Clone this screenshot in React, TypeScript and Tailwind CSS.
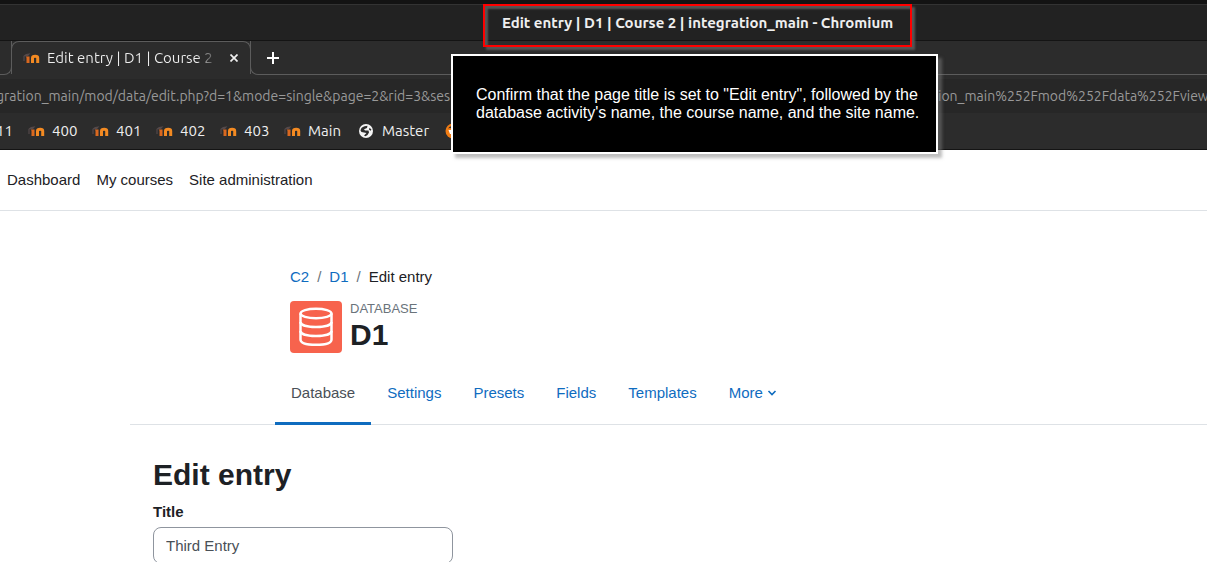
import React from "react";

const chromeFont = "font-['Ubuntu','Noto_Sans',sans-serif]";

function MoodleIcon() {
  return (
    <svg width="17" height="12" viewBox="0 0 17 12" fill="none" aria-hidden="true" className="shrink-0">
      <path d="M0.5 3.800 L3 2 L7.500 1.200 L5 4 L2 4.500 Z" fill="#54494a" />
      <path d="M1 4 V9" stroke="#54494a" strokeWidth="1.200" />
      <path d="M3 4.500 H6.500 V11 H3.500 V6 Z" fill="#d9681f" />
      <path d="M9.500 11 V6 Q9.500 4.300 12.200 4.300 Q14.700 4.300 14.700 6 V11" stroke="#f38a22" strokeWidth="3" />
    </svg>
  );
}

function GlobeIcon() {
  return (
    <svg width="16" height="16" viewBox="0 0 16 16" aria-hidden="true" className="shrink-0">
      <circle cx="8" cy="8" r="7" fill="#f5f5f5" />
      <path d="M2.500 7.500 Q3 4.200 6.500 3.200 L9.500 2.800 L9 5 L6 6.200 L7 7.400 L10.500 7.600 L11 9.500 L9.500 12 L7.500 13.200 L6 12.500 L8.500 10 L3.500 9 Z M11.500 4.800 L13.400 6.500 L12.800 7.800 L11 6.800 Z" fill="#2c2c2c" />
    </svg>
  );
}

function OrangeIcon() {
  return (
    <svg width="16" height="16" viewBox="0 0 16 16" aria-hidden="true" className="shrink-0">
      <circle cx="8" cy="8" r="7.500" fill="#f07c14" />
      <path d="M3 5.500 Q5 2.500 8 3.500 V6 L5 5 Z" fill="#2c2c2c" />
      <path d="M3.500 7 H12 V11 H5 Z" fill="#fff" />
    </svg>
  );
}

function DatabaseIcon() {
  return (
    <svg width="34" height="40" viewBox="0 0 34 40" fill="none" stroke="#fff" strokeWidth="2.500" aria-hidden="true">
      <ellipse cx="17" cy="6.500" rx="15.500" ry="4.700" />
      <path d="M1.500 6.500 V32.500 C1.500 36 8 37.800 17 37.800 S32.500 36 32.500 32.500 V6.500" />
      <path d="M1.500 15 C1.500 18 8 20 17 20 S32.500 18 32.500 15" />
      <path d="M1.500 24 C1.500 27 8 29 17 29 S32.500 27 32.500 24" />
    </svg>
  );
}

const bookmarks = ["400", "401", "402", "403", "Main"];
const tabs = ["Settings", "Presets", "Fields", "Templates"];

function BrowserChrome() {
  return (
    <header className={`${chromeFont} relative bg-[#2c2c2c] text-[#efefef]`}>
      <div className="h-1 bg-[#131313]" />
      <div className="h-[37px] border-t border-b border-t-[#333] border-b-[#141414] bg-[#222]" />
      <div className="flex h-[38px] bg-[#2c2c2c]">
        <div className="h-[34px] w-3 rounded-br-lg border-r border-b border-[#5c5c5c]" />
        <div className="-ml-px flex h-[33px] w-[240px] items-center rounded-t-lg border-x border-t border-[#5c5c5c] pl-[11px] text-[15px]">
          <MoodleIcon />
          <span className="ml-[7px] w-[170px] overflow-hidden whitespace-nowrap bg-linear-to-r from-[#efefef] from-88% to-[#3c3c3c] bg-clip-text text-transparent">
            Edit entry | D1 | Course 2 |
          </span>
          <button aria-label="Close tab" className="ml-[9px] flex size-4 shrink-0 items-center justify-center">
            <svg width="8" height="8" viewBox="0 0 8 8" stroke="#efefef" strokeWidth="1.7"><path d="M0.500 0.500 L7.500 7.500 M7.500 0.500 L0.500 7.500" /></svg>
          </button>
        </div>
        <div className="-ml-px flex h-[34px] flex-1 items-center rounded-bl-lg border-b border-l border-[#5c5c5c] pl-4">
          <button aria-label="New tab">
            <svg width="12" height="12" viewBox="0 0 12 12" stroke="#fff" strokeWidth="2"><path d="M6 0 V12 M0 6 H12" /></svg>
          </button>
        </div>
      </div>
      <div className="flex h-[34px] items-center bg-[#272727] text-[14px] text-[#999]">
        <input aria-label="Address" readOnly className="w-[452px] bg-transparent -indent-1 outline-none" defaultValue="gration_main/mod/data/edit.php?d=1&mode=single&page=2&rid=3&ses" />
        <input aria-label="Address end" readOnly className="ml-[486px] min-w-0 flex-1 bg-transparent outline-none" defaultValue="ion_main%252Fmod%252Fdata%252Fview" />
      </div>
      <nav className="flex h-[37px] items-center border-b border-[#141414] text-[15px]">
        <a href="#11" className="w-7 shrink-0 -indent-1">11</a>
        {bookmarks.map((b) => (
          <a key={b} href={`#${b}`} className="flex w-16 shrink-0 items-center gap-[7px]">
            <MoodleIcon />
            {b}
          </a>
        ))}
        <a href="#master" className="ml-[10px] flex shrink-0 items-center gap-2">
          <GlobeIcon />
          Master
        </a>
        <a href="#more" aria-label="Bookmark" className="ml-4">
          <OrangeIcon />
        </a>
      </nav>
      <div className="absolute left-[483px] top-[4px] flex h-[43px] w-[429px] items-start justify-center border-2 border-[#f00] pt-[7px] text-[15px] leading-5 font-bold whitespace-nowrap shadow-[3px_3px_2px_#555,inset_3px_3px_2px_#555]">
        Edit entry | D1 | Course 2 | integration_main - Chromium
      </div>
      <div className="absolute left-[451px] top-[54px] flex h-[100px] w-[487px] items-center border-2 border-white bg-black pl-[23px] font-['Liberation_Sans',sans-serif] text-[16px] leading-[18px] whitespace-nowrap text-white shadow-[4px_4px_3px_#80808080]">
        <p>
          Confirm that the page title is set to "Edit entry", followed by the
          <br />
          database activity's name, the course name, and the site name.
        </p>
      </div>
    </header>
  );
}

export default function App() {
  return (
    <div className="h-screen overflow-hidden bg-white font-['Liberation_Sans',sans-serif] text-[15px] text-[#1d2125]">
      <BrowserChrome />
      <nav className="flex h-[61px] items-center gap-4 border-b border-[#dee2e6] pl-[7px]">
        <a href="#dashboard">Dashboard</a>
        <a href="#courses">My courses</a>
        <a href="#admin">Site administration</a>
      </nav>
      <main className="ml-[130px] pt-14">
        <div className="pl-40">
          <nav aria-label="Breadcrumb" className="flex gap-2 leading-5">
            <a href="#c2" className="text-[#0f6cbf]">C2</a>
            <span className="text-[#6a737b]">/</span>
            <a href="#d1" className="text-[#0f6cbf]">D1</a>
            <span className="text-[#6a737b]">/</span>
            <span>Edit entry</span>
          </nav>
          <div className="mt-[14px] flex gap-2">
            <div className="flex size-[52px] items-center justify-center rounded bg-[#f7634d]">
              <DatabaseIcon />
            </div>
            <div>
              <div className="text-[13px] leading-4 text-[#6a737b]">DATABASE</div>
              <h1 className="text-[30px] leading-9 font-bold">D1</h1>
            </div>
          </div>
        </div>
        <nav className="mt-2 flex h-16 border-b border-[#dee2e6] pl-[145px] text-[#0f6cbf]">
          <a href="#database" className="-mb-px flex items-center border-b-3 border-[#0f6cbf] px-4 pt-[3px] text-[#495057]">Database</a>
          {tabs.map((t) => (
            <a key={t} href={`#${t}`} className="-mb-px flex items-center border-b-3 border-transparent px-4 pt-[3px]">{t}</a>
          ))}
          <button className="-mb-px flex items-center gap-1 border-b-3 border-transparent px-4 pt-[3px]">
            More
            <svg width="10" height="6" viewBox="0 0 10 6" fill="none" stroke="currentColor" strokeWidth="1.6"><path d="M1.500 1 L5 4.500 L8.500 1" /></svg>
          </button>
        </nav>
        <form className="pt-8 pl-[23px]">
          <h2 className="text-[30px] leading-9 font-bold">Edit entry</h2>
          <label htmlFor="title" className="mt-[9px] block leading-5 font-bold">Title</label>
          <input id="title" defaultValue="Third Entry" className="mt-[5px] h-[37px] w-[300px] rounded-lg border border-[#8f959e] px-3 text-[#495057]" />
        </form>
      </main>
    </div>
  );
}
